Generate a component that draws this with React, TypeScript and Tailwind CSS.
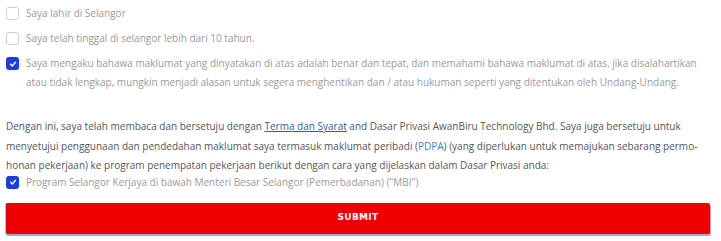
import React from 'react'

function Box({ checked }: { checked?: boolean }) {
  if (checked) {
    return (
      <span className="flex h-[13px] w-[13px] shrink-0 items-center justify-center rounded-[3px] bg-[#1e3de0]">
        <svg width="8" height="8" viewBox="0 0 10 10" fill="none">
          <path d="M2 5.3 L4.2 7.4 L8 2.8" stroke="white" strokeWidth="1.8" strokeLinecap="round" strokeLinejoin="round" />
        </svg>
      </span>
    )
  }
  return <span className="block h-[13px] w-[13px] shrink-0 rounded-[3px] border border-[#cfcfcf] bg-white" />
}

function Row({ checked, children }: { checked?: boolean; children: React.ReactNode }) {
  return (
    <div className="flex items-start gap-[7px]">
      <div className="mt-[3px] shrink-0">
        <Box checked={checked} />
      </div>
      <div className="whitespace-nowrap text-[10px] leading-[19px] text-[#9a9a9a]">{children}</div>
    </div>
  )
}

export default function App() {
  return (
    <div className="h-[241px] w-[721px] overflow-hidden bg-white px-[6px] pt-[4px]" style={{ fontFamily: '"Open Sans", sans-serif' }}>
      <div className="flex flex-col gap-[6px]">
        <Row>Saya lahir di Selangor</Row>
        <Row>Saya telah tinggal di selangor lebih dari 10 tahun.</Row>
        <Row checked>
          Saya mengaku bahawa maklumat yang dinyatakan di atas adalah benar dan tepat, dan memahami bahawa maklumat di atas, jika disalahartikan
          <br />
          atau tidak lengkap, mungkin menjadi alasan untuk segera menghentikan dan / atau hukuman seperti yang ditentukan oleh Undang-Undang.
        </Row>
      </div>

      <p className="mt-[25px] whitespace-nowrap text-[10px] leading-[19.5px] text-[#555]">
        Dengan ini, saya telah membaca dan bersetuju dengan{' '}
        <a className="text-[#2c5f94] underline">Terma dan Syarat</a> and Dasar Privasi AwanBiru Technology Bhd. Saya juga bersetuju untuk
        <br />
        menyetujui penggunaan dan pendedahan maklumat saya termasuk maklumat peribadi (<span className="text-[#2f86d9]">PDPA</span>) (yang diperlukan untuk memajukan sebarang permo-
        <br />
        honan pekerjaan) ke program penempatan pekerjaan berikut dengan cara yang dijelaskan dalam Dasar Privasi anda:
      </p>

      <div className="flex items-center gap-[7px]">
        <Box checked />
        <span className="whitespace-nowrap text-[10px] leading-[12px] text-[#9a9a9a]">
          Program Selangor Kerjaya di bawah Menteri Besar Selangor (Pemerbadanan) ("MBI")
        </span>
      </div>

      <button
        className="mt-[14px] flex h-[31px] w-[705px] -ml-[1px] items-center justify-center rounded-[2px] border-l border-[#b8bcc8] bg-[#ee0000] text-[9px] font-bold tracking-[0.3px] text-white shadow-[1px_2px_0_#a3a9d6]"
        style={{ fontFamily: '"DejaVu Sans", sans-serif' }}
      >
        SUBMIT
      </button>
    </div>
  )
}
